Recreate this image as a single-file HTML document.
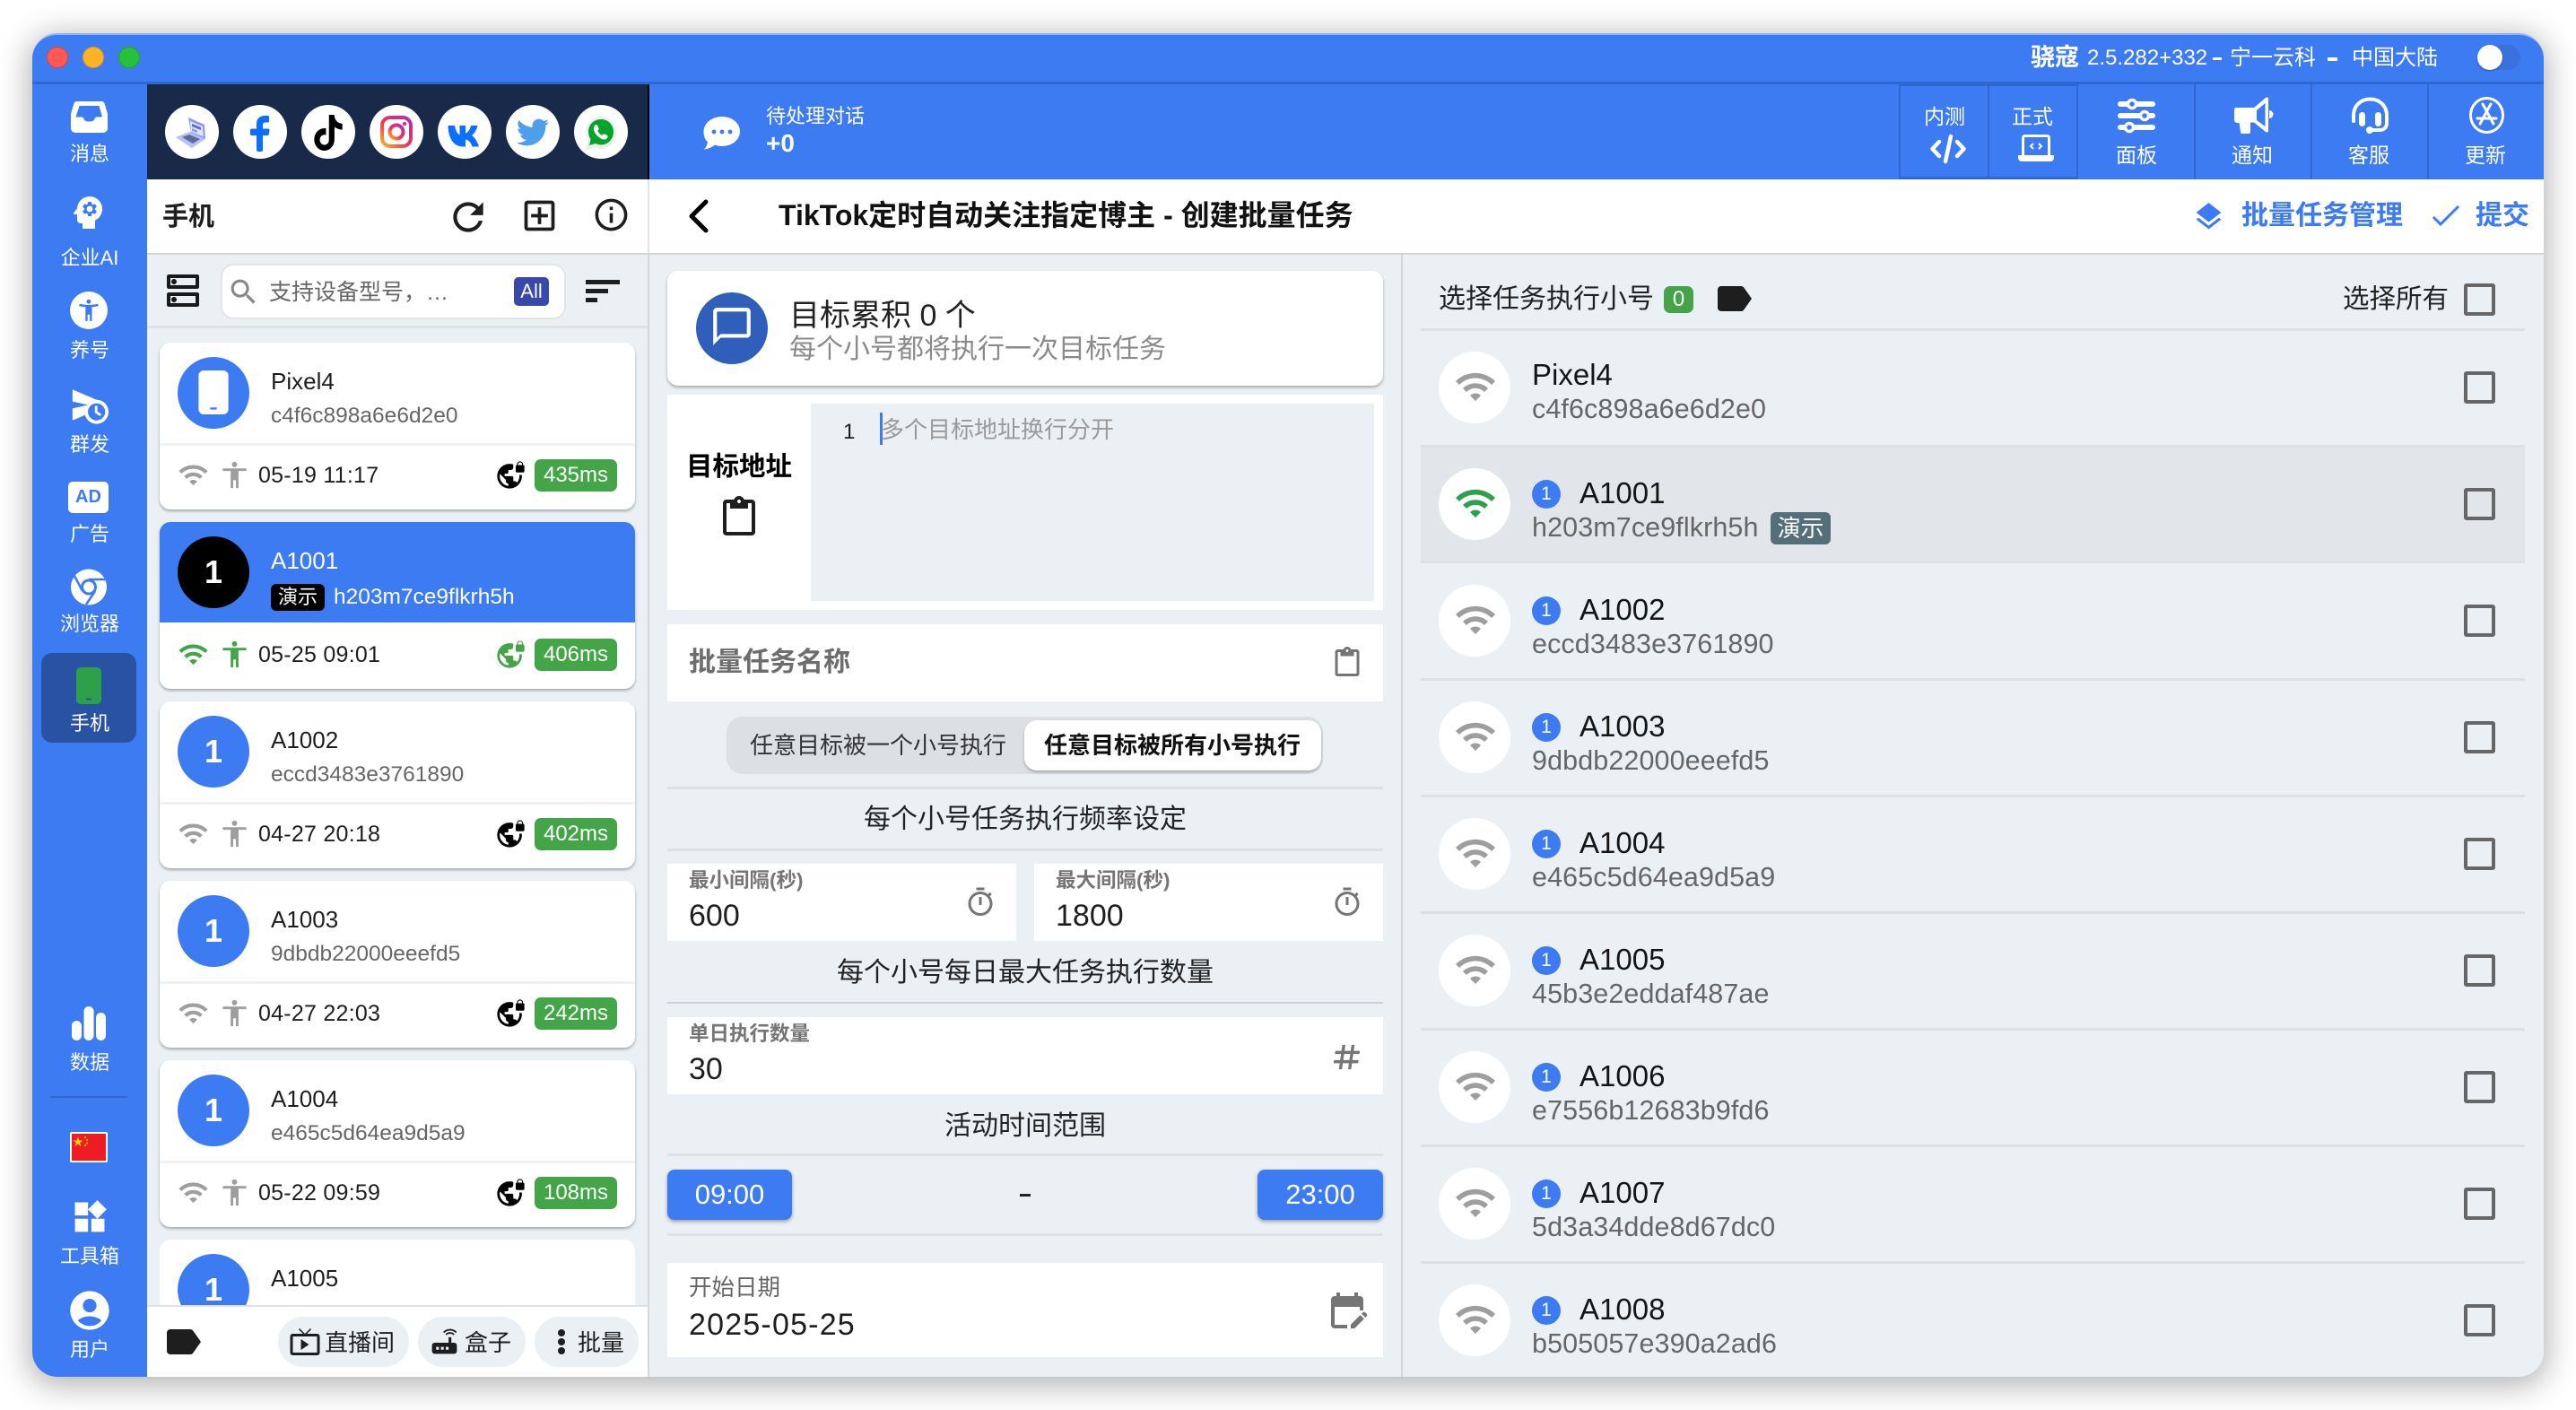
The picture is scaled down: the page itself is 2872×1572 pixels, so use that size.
<!DOCTYPE html>
<html lang="zh"><head><meta charset="utf-8"><title>骁寇</title>
<style>
*{box-sizing:border-box}
html,body{margin:0;padding:0;width:2872px;height:1572px;overflow:hidden;background:#fff}
body{font-family:"Liberation Sans","Noto Sans CJK SC",sans-serif;color:#1e1e1e;position:relative}
.a{position:absolute}
.t{position:absolute;white-space:nowrap;line-height:1}
.w{color:#fff}
.b{font-weight:700}
svg.i{position:absolute;display:block;overflow:visible}
#win{position:absolute;left:36px;top:37px;width:2800px;height:1498px;border-radius:28px;background:#ebf0f5;box-shadow:0 6px 34px 4px rgba(0,0,0,.30)}
.n22{left:36px;width:128px;text-align:center;font-size:22px;color:#fff}
.c{position:absolute;left:178px;width:530px;height:186px;background:#fff;border-radius:12px;box-shadow:0 2px 3px rgba(0,0,0,.3);overflow:hidden}
.c .av{position:absolute;left:20px;top:16px;width:80px;height:80px;border-radius:50%;background:#3d7bf3;color:#fff;font-size:36px;font-weight:700;line-height:80px;text-align:center}
.c .n{position:absolute;left:124px;top:30px;font-size:26px;line-height:1;white-space:nowrap}
.c .id{position:absolute;left:124px;top:70px;font-size:24.5px;line-height:1;color:#666;white-space:nowrap}
.c .sp{position:absolute;left:0;right:0;top:112px;height:3px;background:#f0f1f3}
.c .d{position:absolute;left:110px;top:136px;font-size:25px;letter-spacing:.25px;line-height:1;white-space:nowrap}
.c .ms{position:absolute;left:418px;top:130px;width:92px;height:36px;border-radius:7px;background:#43a548;color:#fff;font-size:24px;line-height:36px;text-align:center}
.c svg.wf{left:20px;top:130px;width:35px;height:35px;fill:#9e9e9e}
.c svg.pr{left:66px;top:130px;width:35px;height:35px;fill:#9e9e9e}
.c svg.gl{left:375px;top:131px;width:33px;height:33px;fill:#000}
.r{position:absolute;left:1604px;width:1200px;height:80px}
.r .ci{position:absolute;left:0;top:0;width:80px;height:80px;border-radius:50%;background:#fff}
.r svg.wf{left:17px;top:15px;width:48px;height:48px;fill:#9e9e9e}
.r .nm{position:absolute;left:157px;top:11px;font-size:33px;line-height:1;white-space:nowrap;color:#151515}
.r .id{position:absolute;left:104px;top:51px;font-size:30.5px;letter-spacing:.1px;line-height:1;white-space:nowrap;color:#666}
.r .bd{position:absolute;left:104px;top:13px;width:32px;height:32px;border-radius:50%;background:#3d7bf3;color:#fff;font-size:21px;line-height:32px;text-align:center}
.r .cb{position:absolute;left:1143px;top:22px;width:35px;height:36px;border:4px solid #666;border-radius:3px}
.dv{position:absolute;left:1584px;width:1231px;height:3px;background:#dde1e5}
.fd{position:absolute;left:744px;width:798px;height:3px;background:#dde1e5}
.wh{position:absolute;background:#fff}
.pl{position:absolute;top:1468px;height:56px;border-radius:28px;background:#ebf0f5}
.so{position:absolute;top:117px;width:60px;height:60px;border-radius:50%;background:#fff}
.tb{position:absolute;top:94px;width:2px;height:106px;background:#2f67d2}
</style></head><body>
<svg width="0" height="0" style="position:absolute">
<defs>
<linearGradient id="ig" x1="0" y1="1" x2="1" y2="0"><stop offset="0" stop-color="#fdb02c"/><stop offset=".45" stop-color="#f5304f"/><stop offset="1" stop-color="#b02fb5"/></linearGradient>
<symbol id="wifi" viewBox="0 0 24 24"><path d="M1 9l2 2c4.97-4.97 13.03-4.97 18 0l2-2C16.93 2.93 7.08 2.93 1 9zm8 8l3 3 3-3c-1.65-1.66-4.34-1.66-6 0zm-4-4l2 2c2.76-2.76 7.24-2.76 10 0l2-2C15.14 9.14 8.87 9.14 5 13z"/></symbol>
<symbol id="person" viewBox="0 0 24 24"><path d="M12 2c1.1 0 2 .9 2 2s-.9 2-2 2-2-.9-2-2 .9-2 2-2zm9 7h-6v13h-2v-6h-2v6H9V9H3V7h18v2z"/></symbol>
<symbol id="vpn" viewBox="0 0 24 24"><path d="M22 4v-.5C22 2.12 20.88 1 19.5 1S17 2.12 17 3.5V4c-.55 0-1 .45-1 1v4c0 .55.45 1 1 1h5c.55 0 1-.45 1-1V5c0-.55-.45-1-1-1zm-.8 0h-3.4v-.5c0-.94.76-1.7 1.7-1.7s1.7.76 1.7 1.7V4zm-2.28 8c.04.33.08.66.08 1 0 2.08-.8 3.97-2.1 5.39-.26-.81-1-1.39-1.9-1.39h-1v-3c0-.55-.45-1-1-1H7v-2h2c.55 0 1-.45 1-1V8h2c1.1 0 2-.9 2-2V3.46c-.95-.3-1.95-.46-3-.46C5.48 3 1 7.48 1 13s4.48 10 10 10 10-4.48 10-10c0-.34-.02-.67-.05-1h-2.03zM10 20.93c-3.95-.49-7-3.85-7-7.93 0-.62.08-1.21.21-1.79L8 16v1c0 1.1.9 2 2 2v1.93z"/></symbol>
<symbol id="refresh" viewBox="0 0 24 24"><path d="M17.65 6.35C16.2 4.9 14.21 4 12 4c-4.42 0-7.99 3.58-7.99 8s3.57 8 7.99 8c3.73 0 6.84-2.55 7.73-6h-2.08c-.82 2.33-3.04 4-5.65 4-3.31 0-6-2.69-6-6s2.69-6 6-6c1.66 0 3.14.69 4.22 1.78L13 11h7V4l-2.35 2.35z"/></symbol>
<symbol id="addbox" viewBox="0 0 24 24"><path d="M19 3H5c-1.11 0-2 .9-2 2v14c0 1.1.89 2 2 2h14c1.1 0 2-.9 2-2V5c0-1.1-.9-2-2-2zm0 16H5V5h14v14zm-8-2h2v-4h4v-2h-4V7h-2v4H7v2h4z"/></symbol>
<symbol id="info" viewBox="0 0 24 24"><path d="M11 7h2v2h-2zm0 4h2v6h-2zm1-9C6.48 2 2 6.48 2 12s4.48 10 10 10 10-4.48 10-10S17.52 2 12 2zm0 18c-4.41 0-8-3.59-8-8s3.59-8 8-8 8 3.59 8 8-3.59 8-8 8z"/></symbol>
<symbol id="dns" viewBox="0 0 24 24"><path d="M19 15v4H5v-4h14m1-2H4c-.55 0-1 .45-1 1v6c0 .55.45 1 1 1h16c.55 0 1-.45 1-1v-6c0-.55-.45-1-1-1zM7 18.5c-.82 0-1.5-.67-1.5-1.5s.68-1.5 1.5-1.5 1.5.67 1.5 1.5-.67 1.5-1.5 1.5zM19 5v4H5V5h14m1-2H4c-.55 0-1 .45-1 1v6c0 .55.45 1 1 1h16c.55 0 1-.45 1-1V4c0-.55-.45-1-1-1zM7 8.5c-.82 0-1.5-.67-1.5-1.5S6.18 5.5 7 5.5s1.5.68 1.5 1.5S7.83 8.5 7 8.5z"/></symbol>
<symbol id="search" viewBox="0 0 24 24"><path d="M15.5 14h-.79l-.28-.27C15.41 12.59 16 11.11 16 9.5 16 5.91 13.09 3 9.5 3S3 5.91 3 9.5 5.91 16 9.5 16c1.61 0 3.09-.59 4.23-1.57l.27.28v.79l5 4.99L20.49 19l-4.99-5zm-6 0C7.01 14 5 11.99 5 9.5S7.01 5 9.5 5 14 7.01 14 9.5 11.99 14 9.5 14z"/></symbol>
<symbol id="label" viewBox="0 0 24 24"><path d="M17.63 5.84C17.27 5.33 16.67 5 16 5L5 5.01C3.9 5.01 3 5.9 3 7v10c0 1.1.9 1.99 2 1.99L16 19c.67 0 1.27-.33 1.63-.84L22 12l-4.37-6.16z"/></symbol>
<symbol id="tv" viewBox="0 0 24 24"><path d="M21 6h-7.59l3.29-3.29L16 2l-4 4-4-4-.71.71L10.59 6H3c-1.1 0-2 .89-2 2v12c0 1.1.9 2 2 2h18c1.1 0 2-.9 2-2V8c0-1.11-.9-2-2-2zm0 14H3V8h18v12zM9 10v8l6-4z"/></symbol>
<symbol id="router" viewBox="0 0 24 24"><path d="M20.2 5.9l.8-.8C19.6 3.7 17.8 3 16 3s-3.6.7-5 2.1l.8.8C13 4.8 14.5 4.2 16 4.2s3 .6 4.2 1.7zm-.9.8c-.9-.9-2.1-1.4-3.3-1.4s-2.4.5-3.3 1.4l.8.8c.7-.7 1.6-1 2.5-1 .9 0 1.8.3 2.5 1l.8-.8zM19 13h-2V9h-2v4H5c-1.1 0-2 .9-2 2v4c0 1.1.9 2 2 2h14c1.1 0 2-.9 2-2v-4c0-1.1-.9-2-2-2zM8 18H6v-2h2v2zm3.5 0h-2v-2h2v2zm3.5 0h-2v-2h2v2z"/></symbol>
<symbol id="clip" viewBox="0 0 24 24"><path d="M19 2h-4.18C14.4.84 13.3 0 12 0c-1.3 0-2.4.84-2.82 2H5c-1.1 0-2 .9-2 2v16c0 1.1.9 2 2 2h14c1.1 0 2-.9 2-2V4c0-1.1-.9-2-2-2zm-7 0c.55 0 1 .45 1 1s-.45 1-1 1-1-.45-1-1 .45-1 1-1zm7 18H5V4h2v3h10V4h2v16z"/></symbol>
<symbol id="timer" viewBox="0 0 24 24"><path d="M15 1H9v2h6V1zm-4 13h2V8h-2v6zm8.03-6.61l1.42-1.42c-.43-.51-.9-.99-1.41-1.41l-1.42 1.42C16.07 4.74 14.12 4 12 4c-4.97 0-9 4.03-9 9s4.02 9 9 9 9-4.03 9-9c0-2.12-.74-4.07-1.97-5.61zM12 20c-3.87 0-7-3.13-7-7s3.13-7 7-7 7 3.13 7 7-3.13 7-7 7z"/></symbol>
<symbol id="hash" viewBox="0 0 24 24"><path d="M20 10V8h-4V4h-2v4h-4V4H8v4H4v2h4v4H4v2h4v4h2v-4h4v4h2v-4h4v-2h-4v-4h4zm-6 4h-4v-4h4v4z"/></symbol>
<symbol id="cal" viewBox="0 0 24 24"><path d="M5 10h14v2h2V6c0-1.1-.9-2-2-2h-1V2h-2v2H8V2H6v2H5c-1.11 0-1.99.9-1.99 2L3 20c0 1.1.89 2 2 2h7v-2H5v-10zm17.84 5.28l-.71.71-2.12-2.12.71-.71c.39-.39 1.02-.39 1.41 0l.71.71c.39.39.39 1.02 0 1.41zm-3.54-.7l2.12 2.12-5.3 5.3H14v-2.12l5.3-5.3z"/></symbol>
<symbol id="layers" viewBox="0 0 24 24"><path d="M11.99 18.54l-7.37-5.73L3 14.07l9 7 9-7-1.63-1.27-7.38 5.74zM12 16l7.36-5.73L21 9l-9-7-9 7 1.63 1.27L12 16z"/></symbol>
<symbol id="phone" viewBox="0 0 28 41"><path d="M5 0h18a5 5 0 0 1 5 5v31a5 5 0 0 1-5 5H5a5 5 0 0 1-5-5V5a5 5 0 0 1 5-5zm6 36.500h6v-2h-6z" fill-rule="evenodd"/></symbol>
</defs></svg>

<div id="win"></div>
<!-- title bar -->
<div class="a" style="left:36px;top:37px;width:2800px;height:57px;background:#3d7bf3;border-radius:28px 28px 0 0;border-top:2px solid #8fb2f7;border-bottom:3px solid #2f67d2"></div>
<div class="a" style="left:52px;top:52px;width:24px;height:24px;border-radius:50%;background:#ff5a52;border:1px solid #d8423c"></div>
<div class="a" style="left:92px;top:52px;width:24px;height:24px;border-radius:50%;background:#feb224;border:1px solid #d99820"></div>
<div class="a" style="left:132px;top:52px;width:24px;height:24px;border-radius:50%;background:#27c038;border:1px solid #1fa52e"></div>
<div class="t w b" style="left:2264px;top:51px;font-size:27px">骁寇</div>
<div class="t w" style="left:2327px;top:53px;font-size:24px">2.5.282+332</div>
<div class="a" style="left:2467px;top:64px;width:10px;height:3px;background:#fff"></div>
<div class="t w" style="left:2486px;top:53px;font-size:24px">宁一云科</div>
<div class="a" style="left:2595px;top:64px;width:11px;height:4px;background:#fff"></div>
<div class="t w" style="left:2622px;top:53px;font-size:24px">中国大陆</div>
<div class="a" style="left:2762px;top:50px;width:48px;height:28px;border-radius:14px;background:#3a71dd"></div>
<div class="a" style="left:2762px;top:50px;width:28px;height:28px;border-radius:50%;background:#fff;box-shadow:0 1px 2px rgba(0,0,0,.3)"></div>

<!-- sidebar -->
<div class="a" style="left:36px;top:94px;width:128px;height:1441px;background:#3d7bf3;border-radius:0 0 0 28px"></div>
<svg class="i" style="left:79px;top:113px" width="41" height="35" viewBox="0 0 41 35" fill="#fff"><path fill-rule="evenodd" d="M7 0H34c2 0 3 1 3.600 2.500L41 14V30a5 5 0 0 1-5 5H5a5 5 0 0 1-5-5V14L3.400 2.500C4 1 5 0 7 0zM9.500 5 5.500 17.500H12c1.500 0 2 .5 2.500 2 .6 2 2.500 3 6 3s5.400-1 6-3c.5-1.500 1-2 2.500-2h6L31.500 5z"/></svg>
<div class="t n22" style="top:161px">消息</div>
<svg class="i" style="left:74px;top:212px;fill:#fff" width="48" height="50" viewBox="0 0 24 24"><path d="M13 3C9.250 3 6.200 5.940 6.020 9.640L4.100 12.200c-.25.33-.01.8.4.8H6v3c0 1.100.9 2 2 2h1v3h7v-4.680c2.360-1.120 4-3.530 4-6.320 0-3.870-3.130-7-7-7zm3 7c0 .13-.01.26-.02.39l.83.66c.08.06.1.16.05.25l-.8 1.390c-.05.09-.16.12-.24.09l-.99-.4c-.21.16-.43.29-.67.39L14 13.830c-.01.1-.1.17-.2.17h-1.600c-.1 0-.18-.07-.2-.17l-.15-1.060c-.25-.1-.47-.23-.68-.39l-.99.4c-.09.03-.2 0-.25-.09l-.8-1.390c-.05-.08-.03-.19.05-.25l.84-.66c-.01-.13-.02-.26-.02-.39s.02-.27.04-.39l-.85-.66c-.08-.06-.1-.16-.05-.26l.8-1.380c.05-.09.15-.12.24-.09l1 .4c.2-.15.43-.29.67-.39l.15-1.060c.02-.1.1-.17.2-.17h1.600c.1 0 .18.07.2.17l.15 1.060c.24.1.46.23.67.39l1-.4c.09-.03.2 0 .24.09l.8 1.380c.05.09.03.2-.05.26l-.85.66c.03.12.04.25.04.39z"/><circle cx="13" cy="10" r="1.700" fill="#fff"/></svg>
<div class="t n22" style="top:277px">企业AI</div>
<svg class="i" style="left:78px;top:325px" width="42" height="42" viewBox="0 0 42 42"><circle cx="21" cy="21" r="21" fill="#fff"/><g transform="translate(6.500 6.500) scale(1.200)" fill="#3d7bf3"><path d="M20.500 6c-2.610.7-5.670 1-8.500 1s-5.890-.3-8.500-1L3 8c1.860.5 4 .83 6 1v13h2v-6h2v6h2V9c2-.17 4.140-.5 6-1l-.5-2zM12 6c1.100 0 2-.9 2-2s-.9-2-2-2-2 .9-2 2 .9 2 2 2z"/></g></svg>
<div class="t n22" style="top:380px">养号</div>
<svg class="i" style="left:77px;top:427px;fill:#fff" width="46" height="49" viewBox="0 0 24 24"><path d="M16.500 12.500H15v4l3 2 .75-1.230-2.250-1.520V12.500zM16 9L2 3v7l9 2-9 2v7l7.270-3.110C10.090 20.830 12.790 23 16 23c3.860 0 7-3.140 7-7s-3.140-7-7-7zm0 12c-2.750 0-4.980-2.220-5-4.970v-.07c.02-2.740 2.250-4.960 5-4.960 2.760 0 5 2.240 5 5S18.760 21 16 21z"/></svg>
<div class="t n22" style="top:485px">群发</div>
<div class="a" style="left:76px;top:537px;width:45px;height:35px;background:#fff;border-radius:5px;color:#3d7bf3;font-size:20px;font-weight:700;line-height:35px;text-align:center">AD</div>
<div class="t n22" style="top:585px">广告</div>
<svg class="i" style="left:79px;top:634px" width="40" height="41" viewBox="0 0 40 41"><circle cx="20" cy="20.500" r="20" fill="#fff"/><circle cx="20" cy="20.500" r="7.500" fill="none" stroke="#3d7bf3" stroke-width="3"/><path d="M20 12H38M13 25 4 8M27 25 17 40" stroke="#3d7bf3" stroke-width="2.500" fill="none"/></svg>
<div class="t n22" style="top:685px">浏览器</div>
<div class="a" style="left:46px;top:728px;width:106px;height:100px;background:#2a52a3;border-radius:12px"></div>
<svg class="i" style="left:85px;top:744px;fill:#2fa04a" width="28" height="41"><use href="#phone"/></svg>
<div class="t n22" style="top:796px">手机</div>
<svg class="i" style="left:80px;top:1122px;fill:#fff" width="38" height="38" viewBox="0 0 38 38"><rect x="0" y="16" width="11" height="22" rx="5.500"/><rect x="13.500" y="0" width="11" height="38" rx="5.500"/><rect x="27" y="7" width="11" height="31" rx="5.500"/></svg>
<div class="t n22" style="top:1174px">数据</div>
<div class="a" style="left:56px;top:1222px;width:86px;height:2px;background:#3367cf"></div>
<div class="a" style="left:78px;top:1262px;width:42px;height:34px;background:#ee1c25;border:2px solid #fff;border-radius:2px"></div>
<svg class="i" style="left:82px;top:1266px" width="20" height="20" viewBox="0 0 20 20" fill="#ffde00"><path d="M5 1.500 6.300 5.500H10.500L7.100 8 8.400 12 5 9.500 1.600 12 2.900 8 -.5 5.500H3.700Z"/><circle cx="13" cy="2" r="1"/><circle cx="15" cy="5" r="1"/><circle cx="15" cy="8.500" r="1"/><circle cx="13" cy="11" r="1"/></svg>
<svg class="i" style="left:78px;top:1335px;fill:#fff" width="44" height="42" viewBox="0 0 24 23"><path d="M13 13v8h8v-8h-8zM3 21h8v-8H3v8zM3 3v8h8V3H3zm13.660-1.310L11 7.340 16.660 13l5.660-5.660-5.660-5.650z"/></svg>
<div class="t n22" style="top:1390px">工具箱</div>
<svg class="i" style="left:74px;top:1435px;fill:#fff" width="52" height="52" viewBox="0 0 24 24"><path d="M12 2C6.480 2 2 6.480 2 12s4.480 10 10 10 10-4.480 10-10S17.520 2 12 2zm0 4c1.930 0 3.500 1.570 3.500 3.500S13.930 13 12 13s-3.500-1.570-3.500-3.500S10.070 6 12 6zm0 14c-2.030 0-4.430-.82-6.140-2.880C7.550 15.800 9.680 15 12 15s4.450.8 6.140 2.120C16.430 19.180 14.030 20 12 20z"/></svg>
<div class="t n22" style="top:1494px">用户</div>

<!-- social bar -->
<div class="a" style="left:164px;top:94px;width:560px;height:106px;background:#19294a;border-right:2px solid #000"></div>
<div class="so" style="left:184px"></div><div class="so" style="left:260px"></div><div class="so" style="left:336px"></div><div class="so" style="left:412px"></div><div class="so" style="left:488px"></div><div class="so" style="left:564px"></div><div class="so" style="left:640px"></div>
<svg class="i" style="left:195px;top:129px" width="38" height="38" viewBox="0 0 38 38"><path d="M15 2 33 10 34 26 18 20Z" fill="#8f9bf0"/><path d="M17 6 31 12 31.500 23 18 18Z" fill="#e3e6fb"/><path d="M19 9 29 13V16L19 12Z" fill="#5569e8"/><path d="M19 14 25 16.500V19L19 17Z" fill="#8f9bf0"/><path d="M1 24 16 18 34 26 19 36Z" fill="#b7bff7"/><path d="M8 24 16 21 28 26 20 31Z" fill="#5d6a9a"/></svg>
<svg class="i" style="left:279px;top:129px" width="22" height="40" viewBox="0 0 22 40" fill="#0b70ff"><path d="M7 40V22H1.500a1.500 1.500 0 0 1-1.500-1.500V16a1.500 1.500 0 0 1 1.500-1.500H7V9c0-6 4-9 9-9h3.500A1.500 1.500 0 0 1 21 1.500V6a1.500 1.500 0 0 1-1.500 1.500H17c-2 0-3 1-3 2.500v4.500h6a1.500 1.500 0 0 1 1.500 1.700l-.7 4.500a1.500 1.500 0 0 1-1.500 1.300H14V38a2 2 0 0 1-2 2H9a2 2 0 0 1-2-2z"/></svg>
<svg class="i" style="left:348px;top:128px" width="36" height="40" viewBox="0 0 24 24" preserveAspectRatio="none"><path d="M12.525.02c1.310-.02 2.610-.01 3.910-.02.08 1.530.63 3.090 1.750 4.170 1.120 1.110 2.700 1.620 4.240 1.790v4.030c-1.440-.05-2.890-.35-4.200-.97-.57-.26-1.100-.59-1.620-.93-.01 2.920.01 5.840-.02 8.750-.08 1.400-.54 2.790-1.350 3.940-1.310 1.920-3.580 3.170-5.910 3.210-1.430.08-2.860-.31-4.080-1.030-2.020-1.190-3.440-3.370-3.650-5.710-.02-.5-.03-1-.01-1.490.18-1.900 1.120-3.720 2.580-4.960 1.660-1.440 3.980-2.130 6.150-1.720.02 1.480-.04 2.960-.04 4.440-.99-.32-2.150-.23-3.020.37-.63.41-1.110 1.040-1.360 1.750-.21.51-.15 1.070-.14 1.610.24 1.640 1.820 3.020 3.500 2.870 1.120-.01 2.190-.66 2.770-1.610.19-.33.4-.67.41-1.060.1-1.790.06-3.570.07-5.360.01-4.030-.01-8.050.02-12.070z"/></svg>
<svg class="i" style="left:424px;top:129px" width="36" height="36" viewBox="0 0 36 36"><rect x="2" y="2" width="32" height="32" rx="9" fill="none" stroke="url(#ig)" stroke-width="4"/><circle cx="18" cy="18" r="7.500" fill="none" stroke="url(#ig)" stroke-width="4"/><circle cx="27" cy="9" r="2.200" fill="#c9309a"/></svg>
<svg class="i" style="left:499px;top:139px" width="38" height="25" viewBox="0 0 38 25" fill="#0b70ff"><path d="M.5 1H8c.8 6 3.200 9 5.500 10.500V1H20v8.500C22.500 9 25 5.500 26 1h7.500c-1 5-4 9-6.500 11 3 2 6 6 8 12.500h-7.500C26 20 23.500 17 20 16.500v8h-2.500C7 24.500.8 16 .5 1z"/></svg>
<svg class="i" style="left:576px;top:133px;fill:#4d9fec" width="36" height="32" viewBox="0 0 24 21" preserveAspectRatio="none"><path transform="translate(0 -2.500)" d="M23.953 4.570a10 10 0 01-2.825.775 4.958 4.958 0 002.163-2.723c-.951.555-2.005.959-3.127 1.184a4.920 4.920 0 00-8.384 4.482C7.690 8.095 4.067 6.130 1.640 3.162a4.822 4.822 0 00-.666 2.475c0 1.710.870 3.213 2.188 4.096a4.904 4.904 0 01-2.228-.616v.060a4.923 4.923 0 003.946 4.827 4.996 4.996 0 01-2.212.085 4.936 4.936 0 004.604 3.417 9.867 9.867 0 01-6.102 2.105c-.39 0-.779-.023-1.170-.067a13.995 13.995 0 007.557 2.209c9.053 0 13.998-7.496 13.998-13.985 0-.21 0-.42-.015-.63A9.935 9.935 0 0024 4.590z"/></svg>
<svg class="i" style="left:651px;top:129px" width="38" height="40" viewBox="0 0 38 40"><path d="M19 1C9 1 2 8.500 2 18c0 3.500 1 6.500 2.500 9L1 39l12-3.500c2 1 4 1.500 6 1.500 10 0 17-8 17-18S29 1 19 1z" fill="#eee"/><path d="M19 4C11 4 5 10 5 18c0 3 1 6 2.500 8L6 33l7-2c2 1 4 1.500 6 1.500 8 0 14-6.500 14-14.500S27 4 19 4z" fill="#02a52a"/><path fill="#fff" d="M13.500 10c1 0 1.500.5 2 1.500l1 2.500c.3.7.1 1.300-.5 2l-.8.9c1 2 3 4 5 5l1-1c.6-.6 1.200-.7 1.900-.4l2.600 1.300c.8.4 1.100 1 .8 2-.5 2-2.500 3-4.500 2.700-5-1-10-6-11-11-.4-2.500 1-5.500 2.500-5.500z"/></svg>

<!-- blue top centre -->
<div class="a" style="left:724px;top:94px;width:2112px;height:106px;background:#3d7bf3"></div>
<svg class="i" style="left:783px;top:130px" width="42" height="37" viewBox="0 0 42 37"><path fill="#fff" d="M22 0c11 0 20 7 20 16.500S33 33 22 33c-3 0-6-.5-8-1.500-3 2.500-7 4.500-12 5 2-2 3.500-5 4-8.500C2.500 25.500 1.500 21 1.500 16.500 1.500 7 11 0 22 0z"/><circle cx="13" cy="17" r="2.400" fill="#3d7bf3"/><circle cx="22" cy="17" r="2.400" fill="#3d7bf3"/><circle cx="31" cy="17" r="2.400" fill="#3d7bf3"/></svg>
<div class="t w" style="left:854px;top:119px;font-size:22px">待处理对话</div>
<div class="t w b" style="left:854px;top:146px;font-size:28px">+0</div>

<div class="tb" style="left:2117px"></div><div class="tb" style="left:2216px;background:#2f67d2"></div><div class="tb" style="left:2315px"></div><div class="tb" style="left:2446px"></div><div class="tb" style="left:2576px"></div><div class="tb" style="left:2706px"></div>
<div class="a" style="left:2117px;top:197px;width:200px;height:3px;background:#2f67d2"></div>
<div class="a" style="left:2117px;top:94px;width:200px;height:2px;background:#2f67d2"></div>
<div class="t w" style="left:2145px;top:119px;font-size:23px">内测</div>
<div class="t w" style="left:2243px;top:119px;font-size:23px">正式</div>
<svg class="i" style="left:2152px;top:149px" width="40" height="34" viewBox="0 0 40 34" fill="none" stroke="#fff" stroke-width="4.500" stroke-linecap="round" stroke-linejoin="round"><path d="M10 9 2.500 17 10 25M30 9 37.500 17 30 25M23 3 17 31"/></svg>
<svg class="i" style="left:2250px;top:150px" width="40" height="30" viewBox="0 0 40 30"><rect x="5.500" y="1.500" width="29" height="23" rx="2" fill="none" stroke="#fff" stroke-width="3"/><path d="M0 23H40V26a4 4 0 0 1-4 4H4a4 4 0 0 1-4-4z" fill="#fff"/><path d="M17 10 14 13 17 16M23 10 26 13 23 16" stroke="#fff" stroke-width="2" fill="none"/></svg>
<svg class="i" style="left:2361px;top:109px" width="42" height="40" viewBox="0 0 42 40"><g stroke="#fff" stroke-width="6" stroke-linecap="round"><path d="M3 7H39M3 20H39M3 33H39"/></g><g fill="#3d7bf3" stroke="#fff" stroke-width="3.500"><circle cx="16" cy="7" r="4.500"/><circle cx="30" cy="20" r="4.500"/><circle cx="13" cy="33" r="4.500"/></g></svg>
<div class="t w" style="left:2359px;top:162px;font-size:23px">面板</div>
<svg class="i" style="left:2491px;top:108px" width="42" height="41" viewBox="0 0 42 41" fill="#fff"><path fill-rule="evenodd" d="M2 12H22L35 1c1.500-1 3-.5 3 1V38c0 1.500-1.500 2-3 1L22 28.500H18V39a2 2 0 0 1-2 2H9a2 2 0 0 1-2-2L5.500 29H3a3 3 0 0 1-3-3V14a2 2 0 0 1 2-2zM25 15V26L34.500 33V7z"/><path d="M39 15a4.500 4.500 0 0 1 0 9z"/></svg>
<div class="t w" style="left:2488px;top:162px;font-size:23px">通知</div>
<svg class="i" style="left:2621px;top:108px" width="43" height="41" viewBox="0 0 43 41"><path d="M3 27V20.500C3 10 11 2.500 21.500 2.500S40 10 40 20.500V29c0 5-3 8-8 8H24" fill="none" stroke="#fff" stroke-width="4" stroke-linecap="round"/><rect x="9" y="17" width="7" height="16" rx="3.500" fill="#fff"/><rect x="27" y="17" width="7" height="16" rx="3.500" fill="#fff"/><circle cx="21" cy="37" r="4" fill="#fff"/></svg>
<div class="t w" style="left:2618px;top:162px;font-size:23px">客服</div>
<svg class="i" style="left:2753px;top:108px" width="39" height="41" viewBox="0 0 39 41" fill="none" stroke="#fff" stroke-width="3"><ellipse cx="19.500" cy="20.500" rx="18" ry="19"/><path d="M15 8 27 30M24 8 12 30M9 24H30" stroke-linecap="round"/></svg>
<div class="t w" style="left:2748px;top:162px;font-size:23px">更新</div>

<!-- header row -->
<div class="a" style="left:164px;top:200px;width:2672px;height:84px;background:#fff;border-bottom:2px solid #d2d6db"></div>
<div class="a" style="left:722px;top:200px;width:2px;height:82px;background:#dfe3e7"></div>
<div class="t b" style="left:181px;top:228px;font-size:29px">手机</div>
<svg class="i" style="left:497px;top:217px;fill:#1e1e1e" width="50" height="50"><use href="#refresh"/></svg>
<svg class="i" style="left:579px;top:218px;fill:#1e1e1e" width="45" height="45"><use href="#addbox"/></svg>
<svg class="i" style="left:660px;top:218px;fill:#1e1e1e" width="43" height="43"><use href="#info"/></svg>
<svg class="i" style="left:760px;top:218px" width="36" height="46" viewBox="0 0 36 46" fill="none" stroke="#000" stroke-width="5" stroke-linecap="round" stroke-linejoin="round"><path d="M27 7 11 23 27 39"/></svg>
<div class="t b" style="left:868px;top:224px;font-size:32px;color:#111">TikTok定时自动关注指定博主 - 创建批量任务</div>
<svg class="i" style="left:2444px;top:223px;fill:#3d7bf3" width="37" height="37"><use href="#layers"/></svg>
<div class="t" style="left:2499px;top:226px;font-size:30px;color:#3d7bf3;font-weight:700">批量任务管理</div>
<svg class="i" style="left:2711px;top:228px" width="32" height="24" viewBox="0 0 32 24" fill="none" stroke="#3d7bf3" stroke-width="3"><path d="M2 14 10 22 30 2"/></svg>
<div class="t" style="left:2760px;top:226px;font-size:30px;color:#3d7bf3;font-weight:700">提交</div>

<!-- left panel search -->
<div class="a" style="left:164px;top:284px;width:558px;height:82px;background:#ebf0f5;border-bottom:3px solid #dfe3e8"></div>
<svg class="i" style="left:180px;top:300px;fill:#1a1a1a" width="48" height="48"><use href="#dns"/></svg>
<div class="a" style="left:246px;top:294px;width:385px;height:62px;background:#fff;border:2px solid #e2e4e7;border-radius:14px"></div>
<svg class="i" style="left:253px;top:307px;fill:#888" width="37" height="37"><use href="#search"/></svg>
<div class="t" style="left:300px;top:314px;font-size:25px;color:#666">支持设备型号，…</div>
<div class="a" style="left:573px;top:309px;width:39px;height:32px;background:#3949ab;border-radius:5px;color:#fff;font-size:22px;line-height:32px;text-align:center">All</div>
<div class="a" style="left:653px;top:312px;width:38px;height:5px;background:#1e1e1e"></div>
<div class="a" style="left:653px;top:322px;width:25px;height:5px;background:#1e1e1e"></div>
<div class="a" style="left:653px;top:332px;width:13px;height:5px;background:#1e1e1e"></div>

<!-- vertical lines -->
<div class="a" style="left:722px;top:284px;width:2px;height:1251px;background:#d4d8dd"></div>
<div class="a" style="left:1562px;top:284px;width:2px;height:1251px;background:#d4d8dd"></div>

<!-- left cards -->
<div class="c" style="top:382px"><div class="av"><svg width="34" height="49" viewBox="0 0 28 41" style="display:block;position:absolute;left:23px;top:15px;fill:#fff"><use href="#phone"/></svg></div><div class="n">Pixel4</div><div class="id">c4f6c898a6e6d2e0</div><div class="sp"></div><svg class="i wf"><use href="#wifi"/></svg><svg class="i pr"><use href="#person"/></svg><div class="d">05-19 11:17</div><svg class="i gl"><use href="#vpn"/></svg><div class="ms">435ms</div></div>

<div class="c" style="top:582px"><div class="a" style="left:0;top:0;width:530px;height:112px;background:#3d7bf3"></div><div class="av" style="background:#000">1</div><div class="n" style="color:#fff">A1001</div><div class="a" style="left:124px;top:69px;width:60px;height:30px;background:#000;border-radius:6px;color:#fff;font-size:22px;line-height:30px;text-align:center">演示</div><div class="id" style="left:194px;color:#fff;top:72px">h203m7ce9flkrh5h</div><svg class="i wf" style="fill:#43a548"><use href="#wifi"/></svg><svg class="i pr" style="fill:#43a548"><use href="#person"/></svg><div class="d">05-25 09:01</div><svg class="i gl" style="fill:#43a548"><use href="#vpn"/></svg><div class="ms">406ms</div></div>

<div class="c" style="top:782px"><div class="av">1</div><div class="n">A1002</div><div class="id">eccd3483e3761890</div><div class="sp"></div><svg class="i wf"><use href="#wifi"/></svg><svg class="i pr"><use href="#person"/></svg><div class="d">04-27 20:18</div><svg class="i gl"><use href="#vpn"/></svg><div class="ms">402ms</div></div>

<div class="c" style="top:982px"><div class="av">1</div><div class="n">A1003</div><div class="id">9dbdb22000eeefd5</div><div class="sp"></div><svg class="i wf"><use href="#wifi"/></svg><svg class="i pr"><use href="#person"/></svg><div class="d">04-27 22:03</div><svg class="i gl"><use href="#vpn"/></svg><div class="ms">242ms</div></div>

<div class="c" style="top:1182px"><div class="av">1</div><div class="n">A1004</div><div class="id">e465c5d64ea9d5a9</div><div class="sp"></div><svg class="i wf"><use href="#wifi"/></svg><svg class="i pr"><use href="#person"/></svg><div class="d">05-22 09:59</div><svg class="i gl"><use href="#vpn"/></svg><div class="ms">108ms</div></div>

<div class="c" style="top:1382px;height:73px;box-shadow:none;border-radius:12px 12px 0 0"><div class="av">1</div><div class="n">A1005</div></div>

<!-- bottom bar -->
<div class="a" style="left:164px;top:1455px;width:558px;height:80px;background:#fff;border-top:2px solid #dfe3e8"></div>
<svg class="i" style="left:180px;top:1472px;fill:#1e1e1e" width="48" height="48"><use href="#label"/></svg>
<div class="pl" style="left:310px;width:146px"></div><div class="pl" style="left:466px;width:120px"></div><div class="pl" style="left:596px;width:116px"></div>
<svg class="i" style="left:322px;top:1478px;fill:#1e1e1e" width="36" height="36"><use href="#tv"/></svg>
<div class="t" style="left:362px;top:1484px;font-size:26px">直播间</div>
<svg class="i" style="left:477px;top:1477px;fill:#1e1e1e" width="37" height="37"><use href="#router"/></svg>
<div class="t" style="left:518px;top:1484px;font-size:26px">盒子</div>
<svg class="i" style="left:620px;top:1482px;fill:#1e1e1e" width="12" height="28"><circle cx="6" cy="4" r="4"/><circle cx="6" cy="14" r="4"/><circle cx="6" cy="24" r="4"/></svg>
<div class="t" style="left:644px;top:1484px;font-size:26px">批量</div>

<!-- centre column -->
<div class="wh" style="left:744px;top:302px;width:798px;height:128px;border-radius:12px;box-shadow:0 2px 3px rgba(0,0,0,.3)"></div>
<div class="a" style="left:776px;top:326px;width:80px;height:80px;border-radius:50%;background:#2f5fba"></div>
<svg class="i" style="left:791px;top:339px;fill:#fff" width="50" height="50" viewBox="0 0 24 24"><path d="M20 2H4c-1.100 0-2 .9-2 2v18l4-4h14c1.100 0 2-.9 2-2V4c0-1.100-.9-2-2-2zm0 14H6l-2 2V4h16v12z"/></svg>
<div class="t" style="left:880px;top:335px;font-size:34px;color:#222">目标累积 0 个</div>
<div class="t" style="left:880px;top:375px;font-size:30px;color:#8a8a8a">每个小号都将执行一次目标任务</div>

<div class="wh" style="left:744px;top:440px;width:798px;height:240px"></div>
<div class="a" style="left:904px;top:450px;width:628px;height:220px;background:#ebf0f5"></div>
<div class="t b" style="left:765px;top:506px;font-size:29.500px;color:#000">目标地址</div>
<svg class="i" style="left:800px;top:553px;fill:#1e1e1e" width="48" height="48"><use href="#clip"/></svg>
<div class="t" style="left:940px;top:470px;font-size:24px">1</div>
<div class="a" style="left:981px;top:460px;width:3px;height:36px;background:#3d7bf3"></div>
<div class="t" style="left:982px;top:466px;font-size:26px;color:#9a9a9a">多个目标地址换行分开</div>

<div class="wh" style="left:744px;top:696px;width:798px;height:86px"></div>
<div class="t b" style="left:768px;top:724px;font-size:30px;color:#6d6d6d">批量任务名称</div>
<svg class="i" style="left:1483.500px;top:721px;fill:#757575" width="36" height="36"><use href="#clip"/></svg>

<div class="a" style="left:810px;top:799px;width:665px;height:64px;background:#dcdfe4;border-radius:18px"></div>
<div class="a" style="left:1142px;top:803px;width:331px;height:56px;background:#fff;border-radius:14px;box-shadow:0 2px 3px rgba(0,0,0,.25)"></div>
<div class="t" style="left:836px;top:818px;font-size:26px;color:#333">任意目标被一个小号执行</div>
<div class="t" style="left:1164px;top:818px;font-size:26px;color:#111;font-weight:700">任意目标被所有小号执行</div>
<div class="fd" style="top:877px"></div>
<div class="t" style="left:744px;width:798px;text-align:center;top:899px;font-size:30px;color:#222">每个小号任务执行频率设定</div>
<div class="fd" style="top:946px"></div>

<div class="wh" style="left:744px;top:963px;width:389px;height:86px"></div>
<div class="wh" style="left:1153px;top:963px;width:389px;height:86px"></div>
<div class="t b" style="left:768px;top:971px;font-size:22.500px;color:#757575">最小间隔(秒)</div>
<div class="t" style="left:768px;top:1004px;font-size:34px;color:#1e1e1e">600</div>
<svg class="i" style="left:1074.500px;top:987.500px;fill:#757575" width="36" height="36"><use href="#timer"/></svg>
<div class="t b" style="left:1177px;top:971px;font-size:22.500px;color:#757575">最大间隔(秒)</div>
<div class="t" style="left:1177px;top:1004px;font-size:34px;color:#1e1e1e">1800</div>
<svg class="i" style="left:1483.500px;top:987.500px;fill:#757575" width="36" height="36"><use href="#timer"/></svg>

<div class="t" style="left:744px;width:798px;text-align:center;top:1070px;font-size:30px;color:#222">每个小号每日最大任务执行数量</div>
<div class="fd" style="top:1117px;height:2px;background:#cdd2d8"></div>

<div class="wh" style="left:744px;top:1134px;width:798px;height:86px"></div>
<div class="t b" style="left:768px;top:1142px;font-size:22.500px;color:#757575">单日执行数量</div>
<div class="t" style="left:768px;top:1175px;font-size:34px;color:#1e1e1e">30</div>
<svg class="i" style="left:1481px;top:1158px;fill:#757575;transform:skewX(-8deg)" width="41" height="41"><use href="#hash"/></svg>

<div class="t" style="left:744px;width:798px;text-align:center;top:1241px;font-size:30px;color:#222">活动时间范围</div>
<div class="fd" style="top:1286px"></div>
<div class="a" style="left:744px;top:1304px;width:139px;height:56px;background:#3d7bf3;border-radius:8px;box-shadow:0 2px 4px rgba(0,0,0,.35);color:#fff;font-size:31px;line-height:56px;text-align:center">09:00</div>
<div class="a" style="left:1402px;top:1304px;width:140px;height:56px;background:#3d7bf3;border-radius:8px;box-shadow:0 2px 4px rgba(0,0,0,.35);color:#fff;font-size:31px;line-height:56px;text-align:center">23:00</div>
<div class="a" style="left:1137px;top:1331px;width:12px;height:3px;background:#222"></div>
<div class="fd" style="top:1375px"></div>

<div class="wh" style="left:744px;top:1408px;width:798px;height:105px"></div>
<div class="t" style="left:768px;top:1424px;font-size:25.500px;color:#666">开始日期</div>
<div class="t" style="left:768px;top:1460px;font-size:34px;letter-spacing:1.200px;color:#1e1e1e">2025-05-25</div>
<svg class="i" style="left:1478px;top:1437px;fill:#757575" width="48" height="48"><use href="#cal"/></svg>

<!-- right column -->
<div class="t" style="left:1604px;top:319px;font-size:30px;color:#222">选择任务执行小号</div>
<div class="a" style="left:1855px;top:319px;width:33px;height:30px;background:#43a548;border-radius:7px;color:#fff;font-size:24px;line-height:30px;text-align:center">0</div>
<svg class="i" style="left:1909px;top:309px;fill:#1e1e1e" width="48" height="48"><use href="#label"/></svg>
<div class="t" style="left:2612px;top:319px;font-size:29.500px;color:#222">选择所有</div>
<div class="a" style="left:2747px;top:316px;width:35px;height:36px;border:4px solid #666;border-radius:3px"></div>
<div class="dv" style="top:366px"></div>
<div class="a" style="left:1584px;top:496px;width:1231px;height:132px;background:#e2e6ea;border-top:3px solid #dde1e5;border-bottom:3px solid #dde1e5"></div>
<div class="dv" style="top:756px"></div><div class="dv" style="top:886px"></div><div class="dv" style="top:1016px"></div><div class="dv" style="top:1146px"></div><div class="dv" style="top:1276px"></div><div class="dv" style="top:1406px"></div>

<div class="r" style="top:392px"><div class="ci"></div><svg class="i wf"><use href="#wifi"/></svg><div class="nm" style="left:104px;top:9px">Pixel4</div><div class="id" style="top:49px">c4f6c898a6e6d2e0</div><div class="cb"></div></div>
<div class="r" style="top:522px"><div class="ci"></div><svg class="i wf" style="fill:#2fa04a"><use href="#wifi"/></svg><div class="bd">1</div><div class="nm">A1001</div><div class="id">h203m7ce9flkrh5h</div><div class="a" style="left:370px;top:49px;width:67px;height:36px;background:#546e7a;border-radius:6px;color:#fff;font-size:26px;line-height:36px;text-align:center">演示</div><div class="cb"></div></div>
<div class="r" style="top:652px"><div class="ci"></div><svg class="i wf"><use href="#wifi"/></svg><div class="bd">1</div><div class="nm">A1002</div><div class="id">eccd3483e3761890</div><div class="cb"></div></div>
<div class="r" style="top:782px"><div class="ci"></div><svg class="i wf"><use href="#wifi"/></svg><div class="bd">1</div><div class="nm">A1003</div><div class="id">9dbdb22000eeefd5</div><div class="cb"></div></div>
<div class="r" style="top:912px"><div class="ci"></div><svg class="i wf"><use href="#wifi"/></svg><div class="bd">1</div><div class="nm">A1004</div><div class="id">e465c5d64ea9d5a9</div><div class="cb"></div></div>
<div class="r" style="top:1042px"><div class="ci"></div><svg class="i wf"><use href="#wifi"/></svg><div class="bd">1</div><div class="nm">A1005</div><div class="id">45b3e2eddaf487ae</div><div class="cb"></div></div>
<div class="r" style="top:1172px"><div class="ci"></div><svg class="i wf"><use href="#wifi"/></svg><div class="bd">1</div><div class="nm">A1006</div><div class="id">e7556b12683b9fd6</div><div class="cb"></div></div>
<div class="r" style="top:1302px"><div class="ci"></div><svg class="i wf"><use href="#wifi"/></svg><div class="bd">1</div><div class="nm">A1007</div><div class="id">5d3a34dde8d67dc0</div><div class="cb"></div></div>
<div class="r" style="top:1432px"><div class="ci"></div><svg class="i wf"><use href="#wifi"/></svg><div class="bd">1</div><div class="nm">A1008</div><div class="id">b505057e390a2ad6</div><div class="cb"></div></div>
</body></html>
